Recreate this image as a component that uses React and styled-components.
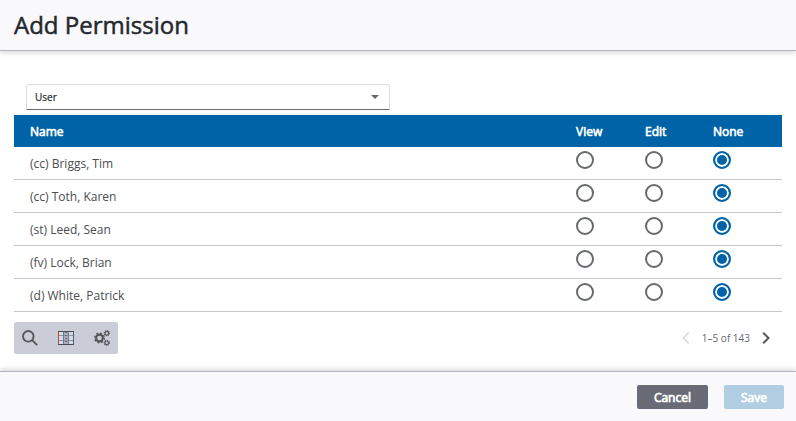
import React from 'react';
import styled, { createGlobalStyle } from 'styled-components';

const GlobalStyle = createGlobalStyle`
  * {
    box-sizing: border-box;
  }

  body {
    margin: 0;
    background: #fff;
    color: #25282d;
    font-family: 'Open Sans', sans-serif;
    font-size: 12px;
  }

  button, select {
    font-family: inherit;
  }
`;

const Dialog = styled.div`
  display: flex;
  flex-direction: column;
  min-height: 100vh;
`;

const DialogHeader = styled.header`
  padding: 8px 14px;
  background: #f9f9fb;
  border-bottom: 1px solid #b4b4c0;
  box-shadow: 0 1px 6px rgba(0, 0, 0, 0.2);
`;

const Title = styled.h1`
  margin: 0;
  font-size: 24px;
  font-weight: 400;
  line-height: 34px;
  -webkit-text-stroke: 0.5px;
`;

const DialogBody = styled.main`
  flex: 1;
  padding: 33px 14px 17px;
`;

const SelectField = styled.label`
  position: relative;
  display: block;
  width: 364px;
  max-width: 100%;
  margin: 0 0 5px 12px;
`;

const Select = styled.select`
  display: block;
  width: 100%;
  height: 26px;
  padding: 0 8px;
  appearance: none;
  background: #fff;
  border: 1px solid #dcdcdc;
  border-bottom-color: #6a6a6a;
  border-radius: 3px 3px 0 0;
  color: #25282d;
  font-size: 10px;
  -webkit-text-stroke: 0.2px;
`;

const SelectArrow = styled.svg`
  position: absolute;
  top: 11px;
  right: 11px;
  pointer-events: none;
`;

const PermissionTable = styled.table`
  width: 100%;
  table-layout: fixed;
  border-collapse: separate;
  border-spacing: 0;
`;

const HeadCell = styled.th`
  width: ${props => props.width || 'auto'};
  height: 32px;
  padding: 2px 0 0 16px;
  background: #0063a7;
  color: #fff;
  font-size: 12px;
  font-weight: 400;
  line-height: 16px;
  text-align: left;
  -webkit-text-stroke: 0.6px;
`;

const Cell = styled.td`
  height: 33px;
  padding: 0 0 0 16px;
  border-bottom: 1px solid #c6c6c6;
  line-height: 16px;
`;

const NameCell = styled(Cell)`
  padding-top: 1px;
  color: #4a4d52;
`;

const RadioCell = styled(Cell)`
  padding-top: 4px;
  vertical-align: top;
`;

const Radio = styled.input`
  display: block;
  width: 18px;
  height: 18px;
  margin: 0;
  appearance: none;
  border: 2px solid #66696e;
  border-radius: 50%;
  background: #fff;

  &:checked {
    border-color: #0063a7;
    background: #0063a7;
    box-shadow: inset 0 0 0 2px #fff;
  }
`;

const TableFooter = styled.div`
  display: flex;
  align-items: center;
  justify-content: space-between;
  margin-top: 10px;
`;

const Toolbar = styled.div`
  display: flex;
  gap: 4px;
  background: #cacdd7;
  border-radius: 2px;
`;

const IconButton = styled.button`
  display: flex;
  align-items: center;
  justify-content: center;
  width: 32px;
  height: 32px;
  padding: 0;
  border: 0;
  background: transparent;
  color: #55575b;
`;

const Pager = styled.nav`
  display: flex;
  align-items: center;
  color: #66696e;
  font-size: 10px;
`;

const PagerButton = styled(IconButton)`
  &:disabled {
    color: #dcdcdc;
  }
`;

const DialogFooter = styled.footer`
  display: flex;
  justify-content: flex-end;
  gap: 16px;
  padding: 13px 12px 12px;
  background: #f9f9fb;
  border-top: 1px solid #b4b4c0;
  box-shadow: 0 -1px 6px rgba(0, 0, 0, 0.2);
`;

const ActionButton = styled.button`
  min-width: 60px;
  height: 24px;
  padding: 1px 17px 0;
  border: 0;
  border-radius: 2px;
  background: ${props => (props.$primary ? '#0063a7' : '#696c77')};
  color: #fff;
  font-size: 12px;
  font-weight: 400;
  -webkit-text-stroke: 0.7px;

  &:disabled {
    background: #b0cde2;
  }
`;

const SearchIcon = () => (
  <svg width="16" height="16" viewBox="0 0 16 16" fill="none" stroke="currentColor">
    <circle cx="6.3" cy="6.3" r="5.3" strokeWidth="1.9" />
    <path d="M10.2 10.2 15.2 15.2" strokeWidth="1.9" />
  </svg>
);

const ColumnsIcon = () => (
  <svg width="16" height="14" viewBox="0 0 16 14" fill="none">
    <path d="M1 1H6V13H1Z" fill="#d3dbe5" />
    <path d="M10 1H15V13H10Z" fill="#dcd8d8" />
    <path d="M6 1H10V13H6Z" fill="#a9adb7" />
    <path d="M1 4.5H15M1 9.5H15" stroke="#8f959f" />
    <path d="M5.5 1V13" stroke="#66798f" />
    <path d="M10.5 1V13" stroke="#697f9e" />
    <path d="M8 1V13" stroke="#6d727c" strokeWidth="2" strokeDasharray="1 2" />
    <path d="M0 .5H16M0 13.5H16" stroke="#4c4d50" />
    <path d="M.5 1V13" stroke="#a4533e" />
    <path d="M15.5 1V13" stroke="#42628e" />
  </svg>
);

const GearsIcon = () => (
  <svg width="16" height="16" viewBox="0 0 16 16" fill="none" stroke="currentColor">
    <circle cx="5.5" cy="8" r="3.4" strokeWidth="2.1" />
    <circle cx="5.5" cy="8" r="4.9" strokeWidth="1.4" strokeDasharray="1.9 1.95" />
    <circle cx="12.8" cy="3.2" r="1.8" strokeWidth="1.2" />
    <circle cx="12.8" cy="3.2" r="2.6" strokeWidth="1.1" strokeDasharray="1.1 .94" />
    <circle cx="12.8" cy="12.8" r="1.8" strokeWidth="1.2" />
    <circle cx="12.8" cy="12.8" r="2.6" strokeWidth="1.1" strokeDasharray="1.1 .94" />
  </svg>
);

const users = [
  '(cc) Briggs, Tim',
  '(cc) Toth, Karen',
  '(st) Leed, Sean',
  '(fv) Lock, Brian',
  '(d) White, Patrick'
];

const levels = ['View', 'Edit', 'None'];

class App extends React.Component {

  constructor(props) {
    super(props);
    this.state = {
      permissions: users.map(() => 'None')
    };
  }

  permissionChanged = (index, level) => {
    const { permissions } = this.state;
    this.setState({
      permissions: permissions.map((current, i) => (i === index ? level : current))
    });
  }

  render() {
    const { permissions } = this.state;
    return (
      <Dialog>
        <GlobalStyle />
        <DialogHeader>
          <Title>Add Permission</Title>
        </DialogHeader>

        <DialogBody>
          <SelectField>
            <Select aria-label="Permission type" defaultValue="User">
              <option>User</option>
            </Select>
            <SelectArrow width="8" height="4" viewBox="0 0 8 4">
              <path d="M0 0H8L4 4Z" fill="#666" />
            </SelectArrow>
          </SelectField>

          <PermissionTable>
            <thead>
              <tr>
                <HeadCell>Name</HeadCell>
                <HeadCell width="69px">View</HeadCell>
                <HeadCell width="68px">Edit</HeadCell>
                <HeadCell width="85px">None</HeadCell>
              </tr>
            </thead>
            <tbody>
              {
                users.map((user, i) =>
                  <tr key={user}>
                    <NameCell>{user}</NameCell>
                    {levels.map(level =>
                      <RadioCell key={level}>
                        <Radio
                          type="radio"
                          name={`permission-${i}`}
                          aria-label={`${level} ${user}`}
                          checked={permissions[i] === level}
                          onChange={() => this.permissionChanged(i, level)}
                        />
                      </RadioCell>
                    )}
                  </tr>
                )
              }
            </tbody>
          </PermissionTable>

          <TableFooter>
            <Toolbar>
              <IconButton type="button" aria-label="Search"><SearchIcon /></IconButton>
              <IconButton type="button" aria-label="Columns"><ColumnsIcon /></IconButton>
              <IconButton type="button" aria-label="Settings"><GearsIcon /></IconButton>
            </Toolbar>
            <Pager>
              <PagerButton type="button" aria-label="Previous page" disabled>
                <svg width="8" height="12" viewBox="0 0 8 12" fill="none" stroke="currentColor" strokeWidth="1.7">
                  <path d="M6.8.7 1.5 6 6.8 11.3" />
                </svg>
              </PagerButton>
              <span>1–5 of 143</span>
              <PagerButton type="button" aria-label="Next page">
                <svg width="8" height="12" viewBox="0 0 8 12" fill="none" stroke="currentColor" strokeWidth="2">
                  <path d="M1.2.7 6.5 6 1.2 11.3" />
                </svg>
              </PagerButton>
            </Pager>
          </TableFooter>
        </DialogBody>

        <DialogFooter>
          <ActionButton type="button">Cancel</ActionButton>
          <ActionButton type="button" $primary disabled>Save</ActionButton>
        </DialogFooter>
      </Dialog>
    );
  }
}

export default App;
